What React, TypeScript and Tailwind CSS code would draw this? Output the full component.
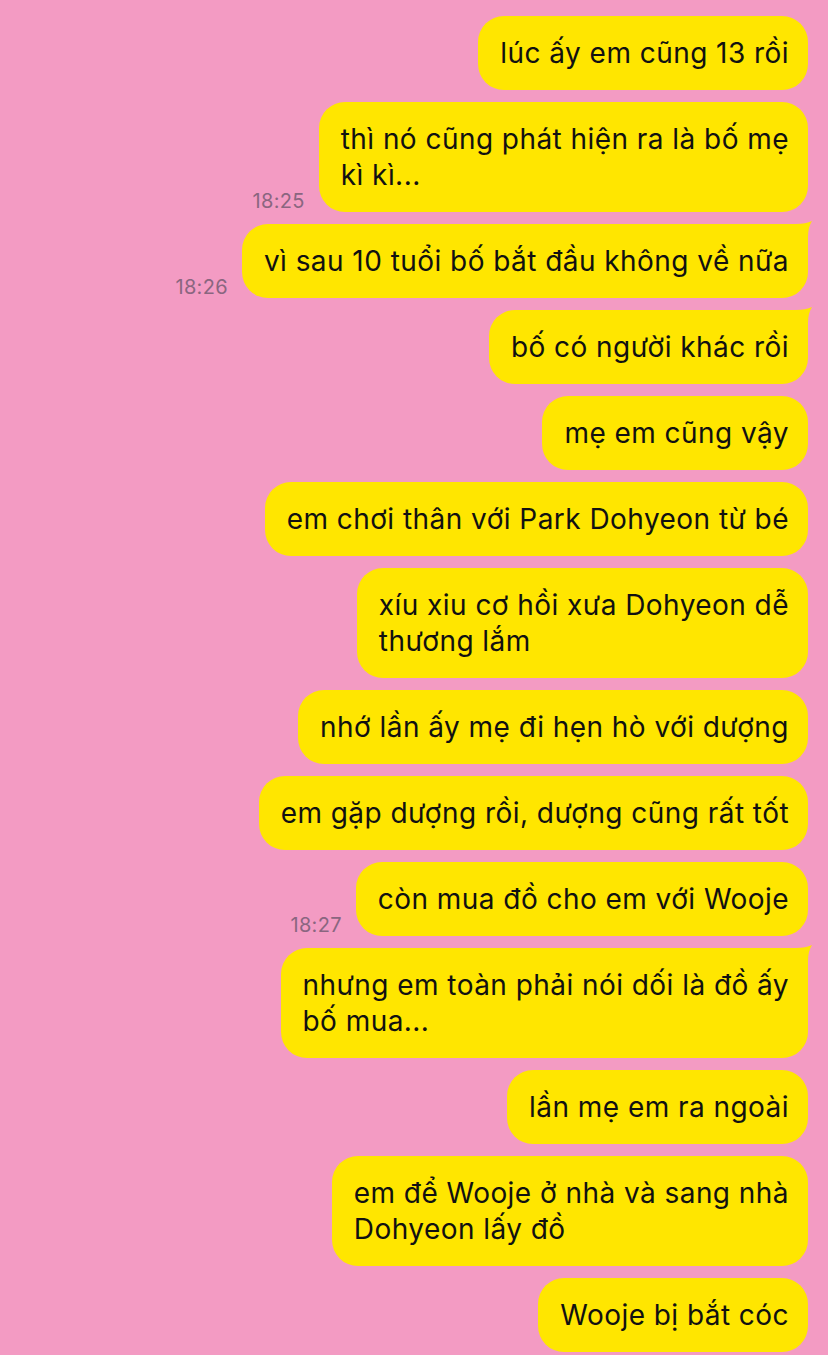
type Msg = { lines: string[]; time?: string; tail?: boolean }

const messages: Msg[] = [
  { lines: ['lúc ấy em cũng 13 rồi'] },
  { lines: ['thì nó cũng phát hiện ra là bố mẹ', 'kì kì...'], time: '18:25' },
  { lines: ['vì sau 10 tuổi bố bắt đầu không về nữa'], time: '18:26', tail: true },
  { lines: ['bố có người khác rồi'], tail: true },
  { lines: ['mẹ em cũng vậy'] },
  { lines: ['em chơi thân với Park Dohyeon từ bé'] },
  { lines: ['xíu xiu cơ hồi xưa Dohyeon dễ', 'thương lắm'] },
  { lines: ['nhớ lần ấy mẹ đi hẹn hò với dượng'] },
  { lines: ['em gặp dượng rồi, dượng cũng rất tốt'] },
  { lines: ['còn mua đồ cho em với Wooje'], time: '18:27' },
  { lines: ['nhưng em toàn phải nói dối là đồ ấy', 'bố mua...'], tail: true },
  { lines: ['lần mẹ em ra ngoài'] },
  { lines: ['em để Wooje ở nhà và sang nhà', 'Dohyeon lấy đồ'] },
  { lines: ['Wooje bị bắt cóc'] },
]

function Tail() {
  return (
    <svg
      className="absolute -top-[3px] -right-[4px]"
      width="32"
      height="32"
      viewBox="0 0 32 32"
    >
      <path d="M0 3 L16 3 Q26 3 32 0 Q28 6 28 16 L28 32 L0 32 Z" fill="#ffe600" />
    </svg>
  )
}

function Bubble({ msg }: { msg: Msg }) {
  return (
    <div className="flex items-end justify-end gap-[14px]">
      {msg.time && (
        <span className="text-[20px] leading-[22px] tracking-[0.3px] text-[#8a6680]">
          {msg.time}
        </span>
      )}
      <div className="relative rounded-[26px] bg-[#ffe600] py-[19px] pl-[22px] pr-[19px] text-[28px] leading-[36px] tracking-[0.45px] whitespace-nowrap text-[#111]">
        {msg.tail && <Tail />}
        <div className="relative">
          {msg.lines.map((l, i) => (
            <div key={i}>{l}</div>
          ))}
        </div>
      </div>
    </div>
  )
}

export default function App() {
  return (
    <div
      className="h-[1355px] w-[828px] overflow-hidden bg-[#f39bc3] pt-4 pr-5"
      style={{ fontFamily: 'Inter, "Noto Sans", sans-serif' }}
    >
      <div className="flex flex-col gap-3">
        {messages.map((m, i) => (
          <Bubble key={i} msg={m} />
        ))}
      </div>
    </div>
  )
}
